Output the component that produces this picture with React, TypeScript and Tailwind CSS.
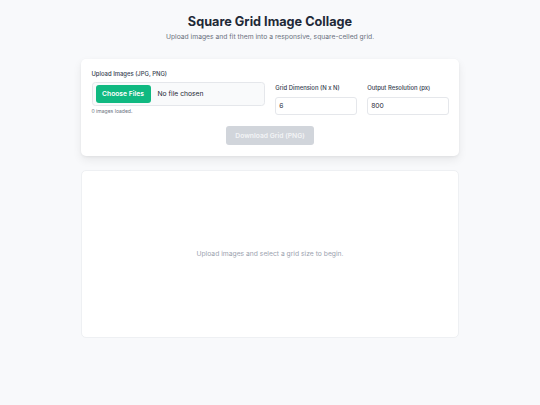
import { useState } from "react";

// Square grid collage — empty state (no files chosen yet).
export default function App() {
  const [grid, setGrid] = useState("6");
  const [res, setRes] = useState("800");
  const [count] = useState(0);

  return (
    <div className="min-h-[405px] bg-[#f8f9fb] px-[13.5px] py-[13.5px] font-['Inter',sans-serif]">
      <div className="mx-auto w-[378px]">
        <div className="text-center">
          <h1 className="text-[12.7px] leading-[15.2px] font-bold text-[#1f2937]">Square Grid Image Collage</h1>
          <p className="mt-[3.4px] text-[6.75px] leading-[10.1px] text-[#6b7280]">
            Upload images and fit them into a responsive, square-celled grid.
          </p>
        </div>

        {/* controls card */}
        <div className="mt-[17px] rounded-[5px] bg-white px-[10.5px] pt-[10.5px] pb-[11px] shadow-[0_4px_10px_rgba(0,0,0,0.07),0_1px_3px_rgba(0,0,0,0.05)]">
          <div className="grid grid-cols-4 items-end gap-x-[10.5px]">
            <div className="col-span-2">
              <div className="mb-[4px] text-[5.9px] leading-[8.4px] font-medium text-[#374151]">Upload Images (JPG, PNG)</div>
              <label className="flex h-[24px] cursor-pointer items-center gap-[7px] rounded-[3.4px] border border-[#e5e7eb] bg-[#f9fafb] pl-[3px]">
                <input type="file" multiple accept="image/jpeg,image/png" className="hidden" />
                <span className="flex h-[18px] w-[55px] items-center justify-center rounded-[3px] bg-[#10b981] text-[6.75px] font-semibold text-white">
                  Choose Files
                </span>
                <span className="text-[6.75px] text-[#1f2937]">No file chosen</span>
              </label>
              <div className="mt-[1.5px] text-[5.06px] leading-[7px] text-[#6b7280]">{count} images loaded.</div>
            </div>
            <div className="flex flex-col">
              <div className="mb-[3.8px] text-[5.9px] leading-[8.4px] font-medium text-[#374151]">Grid Dimension (N x N)</div>
              <input
                value={grid}
                onChange={(e) => setGrid(e.target.value)}
                className="block h-[18px] w-full rounded-[3px] border border-[#e5e7eb] px-[3px] text-[6.75px] text-[#1f2937] outline-none"
              />
            </div>
            <div className="flex flex-col">
              <div className="mb-[3.8px] text-[5.9px] leading-[8.4px] font-medium text-[#374151]">Output Resolution (px)</div>
              <input
                value={res}
                onChange={(e) => setRes(e.target.value)}
                className="block h-[18px] w-full rounded-[3px] border border-[#e5e7eb] px-[3px] text-[6.75px] text-[#1f2937] outline-none"
              />
            </div>
          </div>
          <div className="mt-[11.5px] flex justify-center">
            <button
              disabled
              className="block h-[19px] w-[88px] cursor-not-allowed rounded-[3px] bg-[#d1d5db] text-[6.75px] font-semibold text-[#f3f4f6]"
            >
              Download Grid (PNG)
            </button>
          </div>
        </div>

        {/* preview */}
        <div className="mt-[14px] flex h-[168px] items-center justify-center rounded-[5px] border border-[#eef0f3] bg-white">
          <p className="text-[6.75px] text-[#9ca3af]">Upload images and select a grid size to begin.</p>
        </div>
      </div>
    </div>
  );
}
